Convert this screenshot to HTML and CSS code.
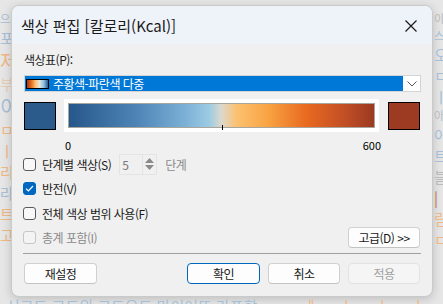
FILE: index.html
```html
<!DOCTYPE html>
<html lang="ko">
<head>
    <meta charset="UTF-8">
    <meta name="viewport" content="width=device-width, initial-scale=1.0">
    <title>색상 편집</title>
    <link rel="stylesheet" href="styles.css">
</head>
<body>
    <div class="page">
        <div class="strip strip-left">
            <span class="bg-blue small">으스</span>
            <span class="bg-blue">포</span>
            <span class="bg-orange big">제</span>
            <span class="bg-peach">부</span>
            <span class="bg-blue big">이</span>
            <span class="bg-orange">ㅁ</span>
            <span class="bg-orange">ㅣ</span>
            <span class="bg-orange">리</span>
            <span class="bg-blue">라</span>
            <span class="bg-orange">트</span>
            <span class="bg-orange">고</span>
        </div>

        <div class="dialog">
            <div class="titlebar">
                <span class="title">색상 편집 [칼로리(Kcal)]</span>
                <svg class="close" width="12" height="12" viewBox="0 0 12 12">
                    <path d="M0.5 0.5 L11.5 11.5 M11.5 0.5 L0.5 11.5" stroke="#1a1a1a" stroke-width="1.2" fill="none"/>
                </svg>
            </div>

            <div class="content">
                <div class="field-label">색상표(P):</div>
                <div class="combo">
                    <div class="combo-selected">
                        <span class="palette-icon"></span>
                        <span>주황색-파란색 다중</span>
                    </div>
                    <div class="combo-arrow">
                        <svg width="10" height="6" viewBox="0 0 10 6">
                            <path d="M0.5 0.5 L5 5 L9.5 0.5" stroke="#555" stroke-width="1" fill="none"/>
                        </svg>
                    </div>
                </div>

                <div class="ramp-row">
                    <div class="swatch swatch-low"></div>
                    <div class="ramp-box">
                        <div class="ramp"><span class="tick"></span></div>
                    </div>
                    <div class="swatch swatch-high"></div>
                </div>
                <div class="ramp-labels"><span>0</span><span>600</span></div>

                <div class="check-row">
                    <span class="checkbox"></span>
                    <span class="check-label">단계별 색상(S)</span>
                    <div class="spinner">
                        <span class="spinner-value">5</span>
                        <div class="spinner-buttons">
                            <svg width="9" height="5" viewBox="0 0 9 5"><path d="M0 5 L4.5 0 L9 5 Z" fill="#8a8a8a"/></svg>
                            <svg width="9" height="5" viewBox="0 0 9 5"><path d="M0 0 L4.5 5 L9 0 Z" fill="#8a8a8a"/></svg>
                        </div>
                    </div>
                    <span class="muted">단계</span>
                </div>
                <div class="check-row">
                    <span class="checkbox checked">
                        <svg width="9" height="7" viewBox="0 0 9 7"><path d="M1 3.6 L3.4 6 L8 1" stroke="#fff" stroke-width="1.2" fill="none"/></svg>
                    </span>
                    <span class="check-label">반전(V)</span>
                </div>
                <div class="check-row">
                    <span class="checkbox"></span>
                    <span class="check-label">전체 색상 범위 사용(F)</span>
                </div>
                <div class="check-row">
                    <span class="checkbox disabled"></span>
                    <span class="check-label muted">총계 포함(I)</span>
                    <button class="button button-advanced">고급(D) &gt;&gt;</button>
                </div>

                <div class="separator"></div>

                <div class="button-row">
                    <button class="button button-wide">재설정</button>
                    <div class="button-group">
                        <button class="button button-default">확인</button>
                        <button class="button">취소</button>
                        <button class="button button-disabled">적용</button>
                    </div>
                </div>
            </div>
        </div>

        <div class="strip strip-right">
            <span class="bg-gray small">이</span>
            <span class="bg-blue small">스트</span>
            <span class="bg-blue">오</span>
            <span class="bg-blue">ㄷ</span>
            <span class="bg-blue">ㅣ</span>
            <span class="bg-gray small">아이</span>
            <span class="bg-blue">아</span>
            <span class="bg-blue">트</span>
            <span class="bg-gray">블</span>
            <span class="bg-rust">|</span>
            <span class="bg-orange">림</span>
            <span class="bg-orange">ㅁ</span>
        </div>

        <div class="strip-bottom">
            <span class="bg-blue">서코드 코드의 코드으도 마이어또 라포함</span>
            <span class="bg-orange">ㅔ ㅡ ㅣ ㅡ ㅣ ㅡ ㅣ ㅡ</span>
        </div>
    </div>
</body>
</html>
```

FILE: styles.css
```css
/* Page and backdrop */
body {
    margin: 0;
    font-family: "Noto Sans CJK KR", "Noto Sans", sans-serif;
    background-color: #e6e6e6;
    overflow: hidden;
}
.page {
    width: 443px;
    height: 304px;
    display: grid;
    grid-template-columns: 11px 422px 10px;
    grid-template-rows: 5px 292px 7px;
    overflow: hidden;
}
.strip {
    grid-row: 1 / 3;
    display: flex;
    flex-direction: column;
    padding-top: 12px;
    gap: 4px;
    font-size: 15px;
    line-height: 17px;
    overflow: hidden;
    white-space: nowrap;
}
.strip-left {
    grid-column: 1;
    align-items: flex-start;
}
.strip-right {
    grid-column: 3;
    align-items: flex-start;
    padding-left: 1px;
}
.strip .small {
    font-size: 11px;
    line-height: 13px;
}
.strip .big {
    font-size: 20px;
    line-height: 21px;
}
.strip-bottom {
    grid-column: 1 / 4;
    grid-row: 3;
    display: flex;
    justify-content: space-between;
    padding: 0 0 0 6px;
    font-size: 15px;
    line-height: 18px;
    white-space: nowrap;
    overflow: hidden;
}
.bg-blue { color: #a6bfd8; }
.bg-orange { color: #f0b884; }
.bg-peach { color: #e8cdb2; }
.bg-gray { color: #bababa; }
.bg-rust { color: #c8764c; }

/* Dialog frame */
.dialog {
    grid-column: 2;
    grid-row: 2;
    background-color: #f0f0f0;
    border: 1px solid #cacaca;
    border-radius: 8px;
    box-shadow: 0 2px 10px rgba(0, 0, 0, 0.18);
    overflow: hidden;
    display: flex;
    flex-direction: column;
    color: #1a1a1a;
    font-size: 12px;
    letter-spacing: -0.5px;
}
.titlebar {
    height: 37px;
    background-color: #eef2f9;
    display: flex;
    align-items: center;
    justify-content: space-between;
    padding: 1px 15px 0 9px;
}
.title {
    font-size: 15px;
    letter-spacing: 0;
}
.content {
    display: flex;
    flex-direction: column;
    padding: 8px 11px 0 11px;
}
.field-label {
    line-height: 16px;
    padding-left: 1px;
}

/* Palette combo */
.combo {
    margin: 7px 0 0 1px;
    height: 17px;
    border: 1px solid #d4d4d4;
    background-color: #fff;
    display: flex;
    box-sizing: border-box;
    padding: 0;
}
.combo-selected {
    flex: 1;
    background-color: #0078d7;
    color: #fff;
    display: flex;
    align-items: center;
    gap: 4px;
    padding-left: 1px;
    line-height: 15px;
}
.palette-icon {
    width: 21px;
    height: 8px;
    border: 1px solid #000;
    background: linear-gradient(to right, #9e3b20, #e8691f, #fcc070, #e6e6e0, #8dc1df, #26578a);
}
.combo-arrow {
    width: 17px;
    display: flex;
    align-items: center;
    justify-content: center;
}

/* Colour ramp */
.ramp-row {
    margin-top: 7px;
    display: flex;
    align-items: center;
    gap: 8px;
    height: 33px;
}
.swatch {
    width: 30px;
    height: 26px;
    border: 1px solid #000;
}
.swatch-low {
    margin-left: 1px;
    background-color: #2a5b8b;
}
.swatch-high {
    margin-left: 1px;
    background-color: #9c3b21;
}
.ramp-box {
    width: 307px;
    height: 25px;
    padding: 4px;
    background-color: #fff;
}
.ramp {
    position: relative;
    height: 23px;
    border: 1px solid #a8a59c;
    background: linear-gradient(to right,
        #26578a 0%, #4d84b6 22%, #7bb0d6 38%, #9ccbe3 46%,
        #dcd9cc 50%, #fcc170 55%, #f9a444 65%, #e8691f 78%,
        #c34f26 90%, #9b3a22 100%);
}
.tick {
    position: absolute;
    left: 153px;
    bottom: -3px;
    width: 1px;
    height: 5px;
    background-color: #000;
}
.ramp-labels {
    margin: 6px 0 0 42px;
    width: 316px;
    display: flex;
    justify-content: space-between;
    font-size: 11px;
    line-height: 14px;
    letter-spacing: 0;
    color: #000;
}

/* Checkbox rows */
.check-row {
    display: flex;
    align-items: center;
    height: 24.5px;
}
.check-row:first-of-type {
    margin-top: 2px;
}
.checkbox {
    width: 11px;
    height: 11px;
    border: 1px solid #5a5a5a;
    border-radius: 3px;
    background-color: #f8f8f8;
    display: flex;
    align-items: center;
    justify-content: center;
    flex-shrink: 0;
}
.checkbox.checked {
    background-color: #0067c0;
    border-color: #0067c0;
}
.checkbox.disabled {
    border-color: #c6c6c6;
    background-color: #f4f4f4;
}
.check-label {
    margin-left: 6px;
}
.muted {
    color: #8a8a8a;
}
.spinner {
    margin-left: 8px;
    width: 38px;
    height: 21px;
    border: 1px solid #e4e4e4;
    display: flex;
    align-items: center;
    justify-content: space-between;
    box-sizing: border-box;
    padding-left: 2px;
}
.spinner-value {
    color: #777;
}
.spinner-buttons {
    width: 13px;
    height: 19px;
    border-left: 1px solid #e4e4e4;
    display: flex;
    flex-direction: column;
    align-items: center;
    justify-content: center;
    gap: 2px;
}
.spinner + .muted {
    margin-left: 8px;
}

/* Buttons */
.button {
    font-family: inherit;
    font-size: 12px;
    letter-spacing: -0.5px;
    color: #1a1a1a;
    width: 72px;
    height: 21px;
    padding: 0;
    background-color: #fdfdfd;
    border: 1px solid #d0d0d0;
    border-bottom-color: #c2c2c2;
    border-radius: 4px;
}
.button-wide {
    width: 73px;
}
.button-advanced {
    margin-left: auto;
    margin-right: 1px;
}
.button-default {
    width: 73px;
    border: 1px solid #0067c0;
}
.button-disabled {
    background-color: #f5f5f5;
    border-color: #e2e2e2;
    color: #a0a0a0;
}
.separator {
    margin: 3px 0 0 0;
    height: 1px;
    background-color: #a0a0a0;
}
.button-row {
    margin-top: 9px;
    display: flex;
    justify-content: space-between;
    padding: 0 1px;
}
.button-group {
    display: flex;
    gap: 8px;
}
```
